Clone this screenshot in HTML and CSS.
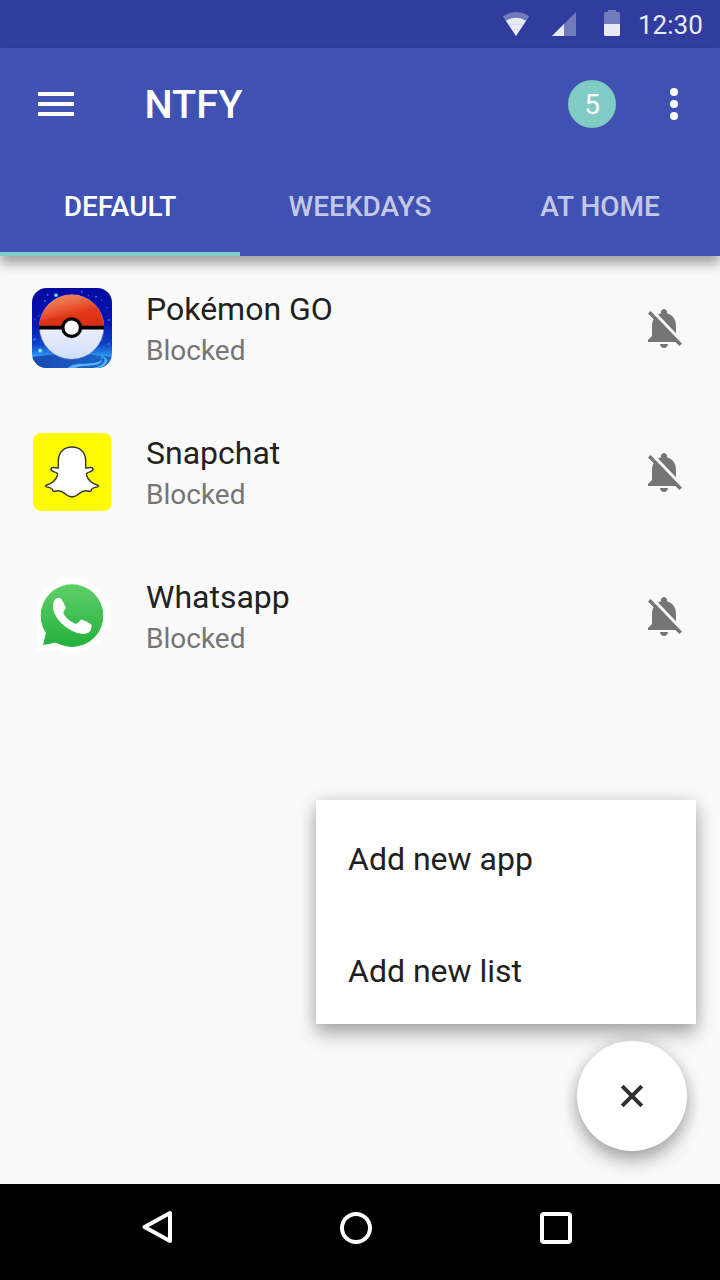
FILE: index.html
```
<!DOCTYPE html>
<html lang="en">
<head>
<meta charset="utf-8">
<title>NTFY</title>
<link rel="stylesheet" href="styles.css">
</head>
<body>
<div class="screen">
  <div class="statusbar">
    <svg class="st-wifi" viewBox="66 30 84 84"><path class="dim" d="M68 49Q108 23 148 49L108 108Z"/><path class="lit" d="M78 62Q108 44 138 62L108 108Z"/><path class="line" d="M87 75Q108 69 129 75M98 91Q108 86 118 91"/></svg>
    <svg class="st-signal" viewBox="0 0 24 24"><path class="dim" d="M24 0V24H0Z"/><path class="lit" d="M12 12V24H0Z"/></svg>
    <svg class="st-battery" viewBox="0 0 16 26"><path class="dim" d="M4 0h8v2h3l1 1v11H0V3l1-1h3z"/><path class="lit" d="M0 14h16v11l-1 1H1l-1-1z"/></svg>
    <span class="clock">12:30</span>
  </div>
  <header class="appbar">
    <div class="toolbar">
      <svg class="menu-icon" viewBox="0 0 36 24"><path d="M0 0h36v4H0zM0 10h36v4H0zM0 20h36v4H0z"/></svg>
      <h1 class="title">NTFY</h1>
      <span class="badge">5</span>
      <svg class="more-icon" viewBox="0 0 8 32"><circle cx="4" cy="4" r="4"/><circle cx="4" cy="16" r="4"/><circle cx="4" cy="28" r="4"/></svg>
    </div>
    <nav class="tabs">
      <span class="tab active">DEFAULT</span>
      <span class="tab">WEEKDAYS</span>
      <span class="tab">AT HOME</span>
    </nav>
  </header>
  <main class="content">
    <div class="row">
      <svg class="app-icon" viewBox="36 36 240 240">
        <defs>
          <linearGradient id="sky" x1="0" y1="0" x2="0" y2="1"><stop offset="0" stop-color="#0409a0"/><stop offset=".45" stop-color="#0716b4"/><stop offset=".7" stop-color="#0c43c8"/><stop offset=".85" stop-color="#2b98f0"/></linearGradient>
          <linearGradient id="red" x1=".1" y1="0" x2=".6" y2="1"><stop offset="0" stop-color="#ee8a62"/><stop offset=".3" stop-color="#ed7148"/><stop offset=".65" stop-color="#e3391b"/><stop offset="1" stop-color="#df3218"/></linearGradient>
          <linearGradient id="pearl" x1="0" y1="0" x2="0" y2="1"><stop offset="0" stop-color="#f4f1fc"/><stop offset=".5" stop-color="#edeefb"/><stop offset="1" stop-color="#cfdff8"/></linearGradient>
          <linearGradient id="sea" x1="0" y1="0" x2="1" y2="0"><stop offset="0" stop-color="#184bb3"/><stop offset="1" stop-color="#1d65cb"/></linearGradient>
          <clipPath id="tile"><rect x="36" y="36" width="240" height="240" rx="44"/></clipPath>
        </defs>
        <g clip-path="url(#tile)">
          <rect x="36" y="36" width="240" height="240" fill="url(#sky)"/>
          <path d="M36 243Q156 224 276 243V276H36Z" fill="url(#sea)"/>
          <path d="M222 236Q264 246 236 257Q220 263 176 263Q150 267 144 276H166Q180 269 200 270Q232 268 240 262Q254 252 234 238Z" fill="#57b3f5"/>
          <path d="M238 236Q266 250 244 266Q236 272 218 276H240Q264 266 262 252Q256 242 242 236Z" fill="#57b3f5"/>
          <g fill="#2f7fe6"><circle cx="83" cy="56" r="3"/><circle cx="75" cy="75" r="3"/><circle cx="44" cy="190" r="4"/><circle cx="57" cy="120" r="2"/><circle cx="185" cy="47" r="3"/><circle cx="228" cy="62" r="3"/><circle cx="206" cy="58" r="2"/><circle cx="262" cy="95" r="2"/><circle cx="266" cy="132" r="3"/><circle cx="245" cy="72" r="2"/><circle cx="266" cy="204" r="3"/><circle cx="60" cy="200" r="2"/><circle cx="44" cy="130" r="2"/></g>
          <g fill="#48aaf5"><circle cx="108" cy="58" r="6"/><circle cx="61" cy="224" r="7"/></g>
          <circle cx="108" cy="58" r="3" fill="#b5e8ff"/><circle cx="60" cy="224" r="4" fill="#a8f4ff"/>
        </g>
        <circle cx="155" cy="153" r="97" fill="url(#pearl)" stroke="#6673c8" stroke-width="2"/>
        <path d="M58 153A97 97 0 0 1 252 153Z" fill="url(#red)"/>
        <path d="M60 134Q155 107 250 134L252 150H58Z" fill="#d92c12" opacity=".5"/>
        <path d="M57 155H253" stroke="#050505" stroke-width="11"/>
        <circle cx="155" cy="155" r="26.500" fill="#fff" stroke="#050505" stroke-width="10"/>
      </svg>
      <div class="text"><span class="name">Pokémon GO</span><span class="state">Blocked</span></div>
      <svg class="bell" viewBox="0 0 24 24"><path d="M20 18.690L7.840 6.140 5.270 3.490 4 4.760l2.800 2.800v.01c-.52.99-.8 2.160-.8 3.420v5l-2 2v1h13.730l2 2L21 19.730l-1-1.040zM12 22c1.110 0 2-.89 2-2h-4c0 1.110.89 2 2 2zm6-7.320V11c0-3.080-1.640-5.640-4.500-6.320V4c0-.83-.67-1.500-1.500-1.500s-1.500.67-1.500 1.500v.68c-.51.12-.99.310-1.440.560L18 14.680z"/></svg>
    </div>
    <div class="row">
      <svg class="app-icon" viewBox="36 36 240 240">
        <rect x="39" y="39" width="236" height="234" rx="24" fill="#fffc00"/>
        <path d="M156 81C133 81 116 96 115 120V144C108 144 101 141 96 143C90 147 93 153 101 155C108 157 114 158 113 164C108 180 94 191 80 195C74 197 76 200 81 201C91 203 98 204 98 210C98 215 103 214 109 213C126 210 132 219 140 225C150 232 162 232 172 225C180 219 186 210 203 213C209 214 214 215 214 210C214 204 221 203 231 201C236 200 238 197 232 195C218 191 204 180 199 164C198 158 204 157 211 155C219 153 222 147 216 143C211 141 204 144 197 144V120C196 96 179 81 156 81Z" fill="#fff" stroke="#3b3b35" stroke-width="4.500" stroke-linejoin="round"/>
      </svg>
      <div class="text"><span class="name">Snapchat</span><span class="state">Blocked</span></div>
      <svg class="bell" viewBox="0 0 24 24"><path d="M20 18.690L7.840 6.140 5.270 3.490 4 4.760l2.800 2.800v.01c-.52.99-.8 2.160-.8 3.420v5l-2 2v1h13.730l2 2L21 19.730l-1-1.040zM12 22c1.110 0 2-.89 2-2h-4c0 1.110.89 2 2 2zm6-7.320V11c0-3.080-1.640-5.640-4.500-6.320V4c0-.83-.67-1.500-1.500-1.500s-1.500.67-1.500 1.500v.68c-.51.12-.99.310-1.440.560L18 14.680z"/></svg>
    </div>
    <div class="row">
      <svg class="app-icon" viewBox="36 36 240 240">
        <defs><linearGradient id="green" gradientUnits="userSpaceOnUse" x1="0" y1="60" x2="0" y2="249"><stop offset="0" stop-color="#60d069"/><stop offset="1" stop-color="#22b03c"/></linearGradient></defs>
        <path d="M45 267L60 209A111 111 0 1 1 105 253Z" fill="#fff"/>
        <g fill="url(#green)"><circle cx="156" cy="155" r="94"/><path d="M69 243L78 206L130 200L113 235Z"/></g>
        <path d="M106 106C110 101 122 101 125 106L137 130C139 135 130 141 130 146C133 157 151 174 167 179C174 180 178 169 183 167C188 166 209 177 214 181C219 209 194 213 178 208C145 201 108 170 100 137C97 122 101 112 106 106Z" fill="#fff"/>
      </svg>
      <div class="text"><span class="name">Whatsapp</span><span class="state">Blocked</span></div>
      <svg class="bell" viewBox="0 0 24 24"><path d="M20 18.690L7.840 6.140 5.270 3.490 4 4.760l2.800 2.800v.01c-.52.99-.8 2.160-.8 3.420v5l-2 2v1h13.730l2 2L21 19.730l-1-1.040zM12 22c1.110 0 2-.89 2-2h-4c0 1.110.89 2 2 2zm6-7.320V11c0-3.080-1.640-5.640-4.500-6.320V4c0-.83-.67-1.500-1.500-1.500s-1.500.67-1.500 1.500v.68c-.51.12-.99.310-1.440.560L18 14.680z"/></svg>
    </div>
    <div class="speed-dial">
      <div class="popup">
        <div class="option">Add new app</div>
        <div class="option">Add new list</div>
      </div>
      <div class="fab"><svg class="close" viewBox="0 0 24 24"><path d="M2.200 2.200L21.800 21.800M21.800 2.200L2.200 21.800"/></svg></div>
    </div>
  </main>
  <footer class="navbar">
    <svg class="nav-back" viewBox="0 0 32 36"><path d="M29 4V32L3.500 18Z"/></svg>
    <svg class="nav-home" viewBox="0 0 32 32"><circle cx="16" cy="16" r="14"/></svg>
    <svg class="nav-recent" viewBox="0 0 32 32"><rect x="2" y="2" width="28" height="28" rx="2"/></svg>
  </footer>
</div>
</body>
</html>
```
FILE: styles.css
```
* { box-sizing: border-box; }
body { margin: 0; font-family: Roboto, "Noto Sans", sans-serif; background: #fafafa; }
svg { display: block; flex: none; }
.screen { width: 720px; height: 1280px; display: flex; flex-direction: column; overflow: hidden; }

.statusbar { height: 48px; background: #303d9f; display: flex; align-items: flex-start; padding-left: 502px; flex: none; }
.statusbar .dim { fill: #717bbc; }
.statusbar .lit { fill: #e8eaf6; }
.statusbar .line { fill: none; stroke: #cdd1ea; stroke-width: 2; }
.st-wifi { width: 28px; height: 28px; margin-top: 10px; }
.st-signal { width: 24px; height: 24px; margin: 12px 0 0 22px; }
.st-battery { width: 16px; height: 26px; margin: 10px 0 0 28px; }
.clock { font-size: 26px; line-height: 32px; margin: 9px 0 0 18px; color: #e8eaf6; }

.appbar { height: 208px; flex: none; background: #3f51b3; box-shadow: 0 8px 11px rgba(0, 0, 0, .35); position: relative; z-index: 1; }
.toolbar { height: 112px; display: flex; align-items: center; padding: 0 42px 0 38px; }
.menu-icon { width: 36px; height: 24px; fill: #fff; }
.title { margin: 0 auto 0 70.500px; padding-top: 2px; font-size: 39.700px; font-weight: 500; line-height: 48px; color: #fff; }
.badge { width: 48px; height: 48px; border-radius: 50%; background: #80cbc4; color: #fff; font-size: 28px; line-height: 50px; text-align: center; }
.more-icon { width: 8px; height: 32px; margin-left: 54px; fill: #fff; }
.tabs { height: 96px; display: grid; grid-template-columns: repeat(3, 1fr); }
.tab { padding-top: 1px; text-align: center; font-size: 28px; font-weight: 500; line-height: 91px; color: rgba(255, 255, 255, .7); border-bottom: 4px solid transparent; }
.tab.active { color: #fff; border-bottom-color: #80cbc4; }

.content { flex: 1; position: relative; background: #fafafa; }
.row { height: 144px; display: flex; align-items: center; padding: 0 32px; }
.app-icon { width: 80px; height: 80px; }
.text { flex: 1; display: flex; flex-direction: column; margin-left: 34px; padding-top: 5px; }
.name { font-size: 32px; line-height: 41px; color: #212121; }
.state { font-size: 28px; line-height: 42px; color: #757575; }
.bell { width: 48px; height: 48px; fill: #757575; }

.speed-dial { position: absolute; right: 24px; bottom: 33px; display: flex; flex-direction: column; align-items: flex-end; gap: 17px; }
.popup { width: 380px; background: #fff; box-shadow: 0 10px 18px rgba(0, 0, 0, .3), 0 0 16px rgba(0, 0, 0, .12); }
.option { height: 112px; padding-left: 32px; font-size: 32px; line-height: 118px; color: #212121; }
.fab { width: 110px; height: 110px; margin-right: 9px; border-radius: 50%; background: #fff; display: flex; align-items: center; justify-content: center; box-shadow: 0 10px 18px rgba(0, 0, 0, .3), 0 0 16px rgba(0, 0, 0, .12); }
.close { width: 24px; height: 24px; fill: none; stroke: #303030; stroke-width: 4; }

.navbar { height: 96px; flex: none; background: #000; display: flex; align-items: flex-start; padding-left: 141px; }
.navbar svg { fill: none; stroke: #fff; stroke-width: 4; stroke-linejoin: round; }
.nav-back { width: 32px; height: 36px; margin-top: 25px; }
.nav-home { width: 32px; height: 32px; margin: 28px 0 0 167px; }
.nav-recent { width: 32px; height: 32px; margin: 28px 0 0 168px; }
```
